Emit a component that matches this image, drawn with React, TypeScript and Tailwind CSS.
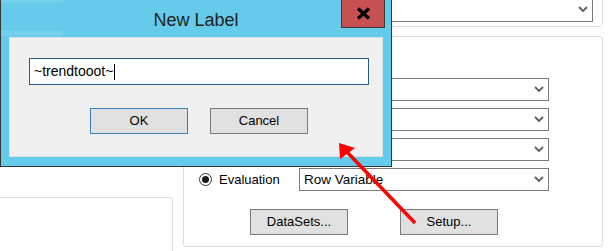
import React from "react";

function Chevron() {
  return (
    <svg width="10" height="7" viewBox="0 0 10 7" className="shrink-0">
      <polyline points="1,1 5,5 9,1" fill="none" stroke="#5f5f5f" strokeWidth="1.8" />
    </svg>
  );
}

function Combo({ text = "", className = "" }: { text?: string; className?: string }) {
  return (
    <div
      className={
        "flex h-[23px] items-center justify-between border border-[#7a7a7a] bg-white pr-[4px] pl-[4px] text-[13.5px] text-black " +
        className
      }
    >
      <span className="leading-none">{text}</span>
      <Chevron />
    </div>
  );
}

function WinButton({ label, primary = false }: { label: string; primary?: boolean }) {
  return (
    <div
      className={
        "flex h-[26px] w-[98px] items-center justify-center border bg-[#e1e1e1] text-[13px] text-black " +
        (primary ? "border-[#3c7fb1]" : "border-[#7a7a7a]")
      }
    >
      {label}
    </div>
  );
}

export default function App() {
  const font = "font-['Liberation_Sans',Arial,sans-serif]";
  return (
    <div className={"relative h-[251px] w-[608px] overflow-hidden bg-white " + font}>
      {/* Background window */}
      <div className="flex flex-col">
        <div className="-mt-[10px] ml-[120px] mr-[5px] h-[37px] rounded-[3px] border border-[#d5dfe5] pt-[6px] pr-[9px]">
          <Combo className="ml-[40px] h-[25px]" />
        </div>
        <div className="mt-[9px] flex items-start">
          <div className="-ml-[6px] mt-[161px] h-[80px] w-[179px] rounded-tr-[3px] border border-[#d5dfe5]" />
          <div className="ml-[10px] h-[211px] w-[420px] rounded-[3px] border border-[#d5dfe5] pt-[41px]">
            <div className="flex flex-col gap-[7px]">
              <div className="flex">
                <div className="w-[115px]" />
                <Combo className="w-[250px]" />
              </div>
              <div className="flex">
                <div className="w-[115px]" />
                <Combo className="w-[250px]" />
              </div>
              <div className="flex">
                <div className="w-[115px]" />
                <Combo className="w-[250px]" />
              </div>
              <div className="flex items-center">
                <div className="flex w-[115px] items-center pl-[15px]">
                  <div className="flex h-[13px] w-[13px] items-center justify-center rounded-full border border-[#333333] bg-white">
                    <div className="h-[7px] w-[7px] rounded-full bg-[#1a1a1a]" />
                  </div>
                  <span className="ml-[7px] text-[13px] text-black">Evaluation</span>
                </div>
                <Combo text="Row Variable" className="w-[250px]" />
              </div>
            </div>
            <div className="mt-[18px] flex gap-[52px] pl-[66px]">
              <WinButton label="DataSets..." />
              <WinButton label="Setup..." />
            </div>
          </div>
        </div>
      </div>

      {/* New Label dialog */}
      <div className="absolute top-0 left-0 flex h-[167px] w-[392px] flex-col border-x border-b border-[#363636] bg-[#65cbea]">
        <div className="relative flex h-[37px] justify-center pt-[10px]">
          <div className="absolute top-0 left-0 h-[3px] w-[62px] bg-[#74d0ed]" />
          <div className="absolute top-[31px] left-0 h-[5px] w-[62px] bg-[#74d0ed]" />
          <span className="text-[18px] leading-[20px] text-[#1e1e1e]">New Label</span>
          <div className="absolute top-0 right-[6px] flex h-[28px] w-[44px] items-center justify-center border-x border-b border-[#3a3a3a] bg-[#c75050]">
            <svg width="15" height="13" viewBox="0 0 15 13">
              <path d="M2,1.5 L13,11.5 M13,1.5 L2,11.5" stroke="#000" strokeWidth="3.4" />
            </svg>
          </div>
        </div>
        <div className="mx-[8px] h-[120px] border border-[#d9e1e4] bg-[#f0f0f0] pt-[20px] pl-[19px]">
          <div className="flex h-[27px] w-[340px] items-center border border-[#2b5b8a] bg-white pl-[4px] text-[14px] text-black">
            <span>~trendtooot~</span>
            <span className="ml-px h-[16px] w-px bg-black" />
          </div>
          <div className="mt-[23px] flex gap-[22px] pl-[61px]">
            <WinButton label="OK" primary />
            <WinButton label="Cancel" />
          </div>
        </div>
      </div>

      {/* Annotation arrow */}
      <svg className="pointer-events-none absolute top-0 left-0" width="608" height="251" viewBox="0 0 608 251">
        <line x1="415" y1="223" x2="347" y2="152" stroke="#f00" strokeWidth="3.5" />
        <polygon points="339,143 340,159 355,148" fill="#f00" />
      </svg>
    </div>
  );
}
